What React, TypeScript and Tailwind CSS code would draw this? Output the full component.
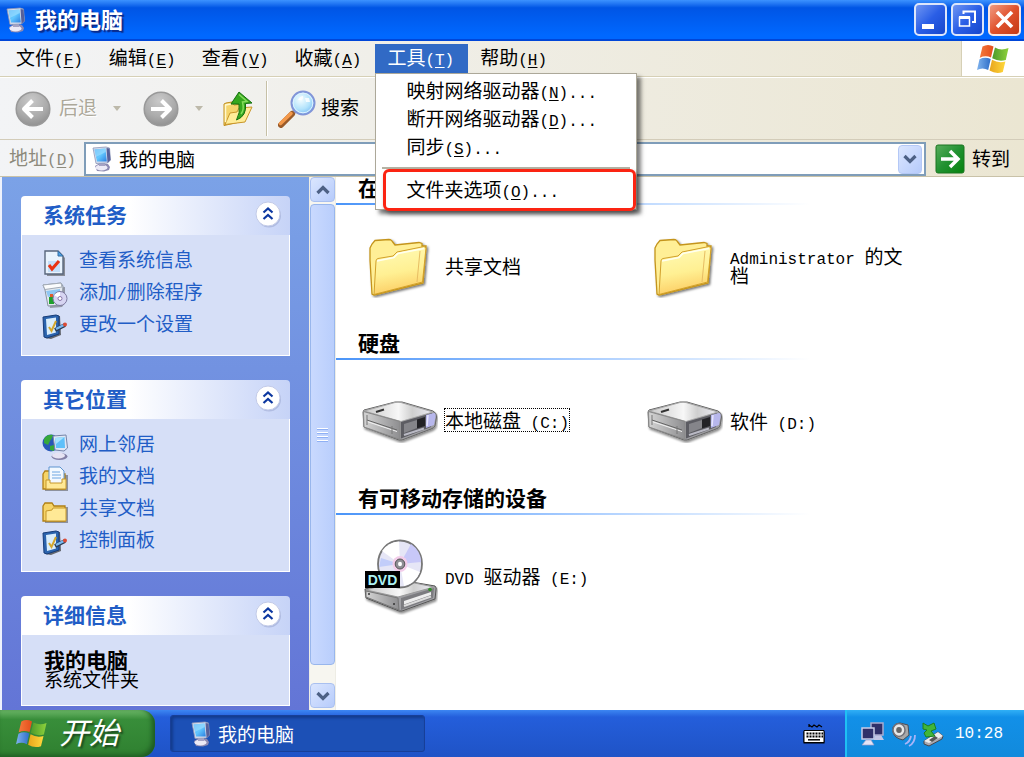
import React from 'react';

type IconProps = { className?: string };

/* Latin runs are set smaller so that two of them fill one CJK cell */
const Latin: React.FC<{ children: React.ReactNode }> = ({ children }) => (
  <span className="font-['Liberation_Mono',monospace] text-[16px] leading-0 whitespace-pre-wrap">{children}</span>
);

const Mixed: React.FC<{ text: string }> = ({ text }) => (
  <>
    {text.split(/([\x20-\x7e]+)/).filter(Boolean).map((part, i) =>
      /^[\x20-\x7e]+$/.test(part) ? <Latin key={i}>{part}</Latin> : <span key={i}>{part}</span>
    )}
  </>
);

const Mnemonic: React.FC<{ text: string; letter: string; tail?: string }> = ({ text, letter, tail }) => (
  <>
    {text}
    <Latin>(<span className="underline underline-offset-2">{letter}</span>){tail}</Latin>
  </>
);

const ComputerIcon: React.FC<IconProps> = ({ className }) => (
  <svg viewBox="0 0 20 26" className={className} aria-hidden="true">
    <defs>
      <linearGradient id="screen" x1="0" y1="0" x2="1" y2="1">
        <stop offset="0" stopColor="#3fa2f2" />
        <stop offset=".5" stopColor="#63c8ff" />
        <stop offset="1" stopColor="#2c7fe0" />
      </linearGradient>
    </defs>
    <path d="M3 20 L8 17 L16 18 L18 21 L17 24 L12 25.500 L5 25 Z" fill="#8d8ab2" />
    <ellipse cx="9.500" cy="21.500" rx="6" ry="3" fill="#eceaf6" />
    <path d="M7 16 h6 v4 h-6 z" fill="#a5a3c4" />
    <path d="M1 2 L14 1 L17.500 2 L18.500 14 L15.500 17 L4 17.500 Z" fill="#d5dcec" stroke="#8d97b8" strokeWidth=".8" />
    <path d="M14.500 2 L17.500 2.500 L18.500 14 L15.500 17 Z" fill="#56609a" />
    <path d="M2.500 3.500 L13.500 2.500 L14.800 15.500 L5 15.500 Z" fill="url(#screen)" />
    <path d="M2.500 3.500 L13.500 2.500 L13.800 6 L4 11 Z" fill="#a4e0ff" opacity=".6" />
  </svg>
);

const FlagIcon: React.FC<IconProps> = ({ className }) => (
  <svg viewBox="0 0 32 30" className={className} aria-hidden="true">
    <defs>
      <linearGradient id="fr" x1="0" x2="1"><stop offset="0" stopColor="#f4793b" /><stop offset="1" stopColor="#e44d1c" /></linearGradient>
      <linearGradient id="fg" x1="0" x2="1"><stop offset="0" stopColor="#4c9a2b" /><stop offset="1" stopColor="#8ed13c" /></linearGradient>
      <linearGradient id="fb" x1="0" x2="1"><stop offset="0" stopColor="#7fb3ee" /><stop offset="1" stopColor="#2f6ec8" /></linearGradient>
      <linearGradient id="fy" x1="0" x2="1"><stop offset="0" stopColor="#e8a51c" /><stop offset="1" stopColor="#ffd83c" /></linearGradient>
    </defs>
    <path d="M5.500 2.500 Q11 -.5 16.500 2.500 L14 13.500 Q8.500 11 2.800 13.800 Z" fill="url(#fr)" />
    <path d="M18 3.500 Q24 7 31.500 4 L28.800 16 Q22 18 15.200 14.300 Z" fill="url(#fg)" />
    <path d="M2.500 15.200 Q8 12.500 13.700 15 L11.200 26 Q5.500 23 0 26 Z" fill="url(#fb)" />
    <path d="M15 15.800 Q21.500 19.500 28.400 17.500 L25.800 28 Q19 30.500 12.500 26.500 Z" fill="url(#fy)" />
  </svg>
);

const NavCircle: React.FC<{ flip?: boolean }> = ({ flip }) => (
  <svg viewBox="0 0 36 36" className="size-9 shrink-0" aria-hidden="true">
    <defs>
      <radialGradient id="gray" cx=".45" cy=".25" r=".8">
        <stop offset="0" stopColor="#c9c9c9" />
        <stop offset=".6" stopColor="#ababab" />
        <stop offset="1" stopColor="#8d8d8d" />
      </radialGradient>
    </defs>
    <circle cx="18" cy="18" r="16.800" fill="url(#gray)" stroke="#999" strokeWidth="1.500" />
    <path d={flip ? 'M8 18 H27 M18.500 9.500 L27 18 L18.500 26.500' : 'M28 18 H9 M17.500 9.500 L9 18 L17.500 26.500'} fill="none" stroke="#fff" strokeWidth="4" strokeLinejoin="round" />
  </svg>
);

const FolderUpIcon = () => (
  <svg viewBox="0 0 32 36" className="h-9 w-8" aria-hidden="true">
    <path d="M2 13 L4 12 L10 11 L12 14 L20 13 L22 16 L22 30 L2 34.500 Z" fill="#f5d56c" stroke="#c08c1a" />
    <path d="M3 33.500 L8 22 L15 21 L17 17 L30 16 L23 31 Z" fill="#ffec98" stroke="#c9962a" />
    <path d="M3.500 31 L3.500 14 L9 13" fill="none" stroke="#fff8cc" strokeWidth="1.500" />
    <path d="M17 1 L30 12 L23.500 12.500 Q25 25 14.500 29 Q18.500 22 17 13 L9 13 Z" fill="#35a71e" stroke="#157010" />
    <path d="M17 3.500 L25 10.500 L20.500 11 Q22.500 19 19 23" fill="none" stroke="#85dc5c" strokeWidth="1.500" />
  </svg>
);

const SearchIcon = () => (
  <svg viewBox="0 0 38 38" className="size-[38px]" aria-hidden="true">
    <defs>
      <radialGradient id="lens" cx=".4" cy=".35" r=".7">
        <stop offset="0" stopColor="#f4fdff" />
        <stop offset=".6" stopColor="#b2e3fc" />
        <stop offset="1" stopColor="#77b9f2" />
      </radialGradient>
    </defs>
    <path d="M17 21 L13 25" stroke="#8d93b5" strokeWidth="4" />
    <path d="M14 24 L3 35" stroke="#9a5b2a" strokeWidth="6" strokeLinecap="round" />
    <path d="M13 23.500 L2.500 33.500" stroke="#f4994a" strokeWidth="3.500" strokeLinecap="round" />
    <circle cx="25" cy="13" r="11.500" fill="url(#lens)" stroke="#8295d8" strokeWidth="2" />
    <circle cx="25" cy="13" r="9.800" fill="none" stroke="#dff3ff" />
    <path d="M20 10 q2-4 5-4 q1 3-2 4 z M27 8 h4 l1 4 h-4z" fill="#fff" opacity=".8" />
  </svg>
);

const GoIcon = () => (
  <svg viewBox="0 0 30 30" className="size-[30px] shrink-0" aria-hidden="true">
    <defs>
      <linearGradient id="go" x1="0" y1="0" x2="1" y2="1">
        <stop offset="0" stopColor="#58ad5c" />
        <stop offset=".5" stopColor="#219131" />
        <stop offset="1" stopColor="#05830d" />
      </linearGradient>
    </defs>
    <rect x="1" y="1" width="28" height="28" rx="2" fill="url(#go)" stroke="#1a7420" />
    <path d="M6 15 H22 M15 7 L23 15 L15 23" fill="none" stroke="#fff" strokeWidth="3.500" />
  </svg>
);

const BigFolder = () => (
  <svg viewBox="0 0 76 62" className="w-[76px]" aria-hidden="true">
    <defs>
      <linearGradient id="fold" x1="0" y1="0" x2=".2" y2="1">
        <stop offset="0" stopColor="#fffbb8" />
        <stop offset=".6" stopColor="#fff093" />
        <stop offset="1" stopColor="#fccf66" />
      </linearGradient>
      <filter id="fs" x="-20%" y="-20%" width="150%" height="150%">
        <feDropShadow dx="1.500" dy="1.500" stdDeviation="1" floodOpacity=".55" />
      </filter>
    </defs>
    <g filter="url(#fs)">
      <path d="M8 12 L10 8 L13 4.500 L27 3.500 Q29 3.500 30 5 L33 9 L57 6.500 L60 7.500 L60 10 L64 10 L61 47 L12 59 L10 58 L8 24 Z" fill="#ffef96" stroke="#c4941a" strokeWidth="1.300" />
      <path d="M14 25 Q14 23 16 22.500 L31 20 L35 16 L62 10.500 L64 12 L60.500 46 L12 58.500 Z" fill="url(#fold)" stroke="#d2a02a" />
      <path d="M15 25 L32 21.500 L36 17.500 L62 12.500" fill="none" stroke="#fffff0" strokeWidth="1.500" />
      <path d="M58 15 L55 46" stroke="#e7bd63" fill="none" />
    </g>
  </svg>
);

const DriveDefs = () => (
  <defs>
    <linearGradient id="dtop" x1="0" y1="0" x2="1" y2="0">
      <stop offset="0" stopColor="#c9c9c9" />
      <stop offset=".5" stopColor="#f7f7f7" />
      <stop offset=".7" stopColor="#cfcfcf" />
      <stop offset="1" stopColor="#ececf4" />
    </linearGradient>
    <linearGradient id="dside" x1="0" y1="0" x2="1" y2="0">
      <stop offset="0" stopColor="#d4d4d4" />
      <stop offset="1" stopColor="#8e8e90" />
    </linearGradient>
    <filter id="ds" x="-20%" y="-20%" width="150%" height="150%">
      <feDropShadow dx="1" dy="2" stdDeviation="1" floodOpacity=".45" />
    </filter>
  </defs>
);

const HardDrive = () => (
  <svg viewBox="0 0 76 42" className="w-[76px]" aria-hidden="true">
    <DriveDefs />
    <g filter="url(#ds)">
      <path d="M1 11 L2 9 L33 1 L40 1 L71 10 Q75 12 74.500 16 L73 25 Q72 27 69 28 L40 39 L37 39 L2 26 Z" fill="#9c9ca0" stroke="#666" />
      <path d="M2 10 L33 1.500 Q36 1 39 1.500 L71 11 L39 20.500 Z" fill="url(#dtop)" stroke="#a6a6a6" />
      <path d="M1.500 10.500 L38 20.500 L38 38.500 L2 26 Z" fill="url(#dside)" stroke="#888" />
      <path d="M39 21 L70 12 L69 26 L39 37.500 Z" fill="#5c5c62" />
      <path d="M42 23 L55 19 L55 27 L42 32 Z" fill="#85858a" />
      <path d="M55 18.500 L63 16 L63 25 L55 27.500 Z" fill="#242428" />
      <path d="M64 14 L72 12 Q74 12 73.500 16 L72 24 L64 27 Z" fill="#b7b7ec" />
      <path d="M66 14 L65 25" stroke="#e6e6ff" strokeWidth="1.500" />
      <path d="M42 34 L62 27.500" stroke="#b9b9c4" strokeWidth="2" />
      <path d="M14 11 L22 8.500" stroke="#333" strokeWidth="2" />
      <path d="M5 19 L35 29" stroke="#666" />
      <path d="M5 20.500 L35 30.500" stroke="#f4f4f4" />
      <path d="M5 14 V24 M30 25 V33" stroke="#777" />
    </g>
  </svg>
);

const DvdDrive = () => (
  <svg viewBox="0 0 76 76" className="w-[76px]" aria-hidden="true">
    <DriveDefs />
    <g filter="url(#ds)">
      <path d="M3 50 L38 41 L73 47 Q75 49 74 51 L73 60 L40 72 L37 72 L4 59 Z" fill="#a0a0a4" stroke="#555" />
      <path d="M4 51 L38 41 L72 48 L36 58 Z" fill="url(#dtop)" stroke="#999" />
      <path d="M4 52 L36 59 L37 71 L4 58 Z" fill="url(#dside)" stroke="#777" />
      <path d="M39 59 L72 49 L71 59 L39 71 Z" fill="#7c7c80" />
      <path d="M42 62 L69 53 V56 L42 65.500 Z" fill="#eee" />
      <path d="M42 67 L69 57.500" stroke="#dcdcdc" strokeWidth="2" />
      <circle cx="68" cy="50.500" r="1.800" fill="#2f8f25" />
      <circle cx="32" cy="65" r="1" fill="#333" />
      <circle cx="7" cy="55" r="1" fill="#333" />
    </g>
    <ellipse cx="38" cy="25" rx="22" ry="23.500" fill="#e6e6f6" stroke="#777" strokeWidth="1.800" />
    <path d="M38 25 L20 12 Q26 3 37 2.500 Z" fill="#fff" />
    <path d="M38 25 L49 5 Q59 12 59 23 Z" fill="#c8c8f8" />
    <path d="M38 25 L58 33 Q53 45 42 47 Z" fill="#fff" />
    <path d="M38 25 L17 28 L19 19 Z" fill="#c2cdfa" />
    <ellipse cx="38" cy="25" rx="7.500" ry="8" fill="#f3cdea" />
    <ellipse cx="38" cy="25" rx="4.800" ry="5" fill="#8e8e94" stroke="#555" />
    <ellipse cx="38" cy="25" rx="2" ry="2.300" fill="#fff" />
    <rect x="3" y="32" width="35" height="17" fill="#000" />
    <text x="20.500" y="46" textAnchor="middle" fontSize="14" fontWeight="700" fontFamily="Liberation Sans, sans-serif" fill="#aef3f4">DVD</text>
  </svg>
);

const CheckDocIcon = () => (
  <svg viewBox="0 0 26 28" className="w-[26px]" aria-hidden="true">
    <path d="M5 3 H17 L23 9 V27 H5 Z" fill="#555" opacity=".6" />
    <path d="M3 2 H16 L21 7 V25 H3 Z" fill="#e9f3fd" stroke="#59677c" strokeWidth="1.400" />
    <path d="M16 2 V7 H21 Z" fill="#4ba3e8" stroke="#376ca0" />
    <path d="M6 12 h12 v11 h-12z" fill="#c4dffa" />
    <path d="M7 16 L10 20 L17 12" fill="none" stroke="#ea3312" strokeWidth="3" />
  </svg>
);

const ProgramsIcon = () => (
  <svg viewBox="0 0 26 28" className="w-[26px]" aria-hidden="true">
    <path d="M5 8 L23 6 L23 22 L20 26 L8 27 Z" fill="#444" opacity=".45" />
    <path d="M1 4 L19 2 L21 5 L20 24 L6 25 L3 9 Z" fill="#e4e9ef" stroke="#8993a1" />
    <path d="M1 4 L19 2 L20 6 L3 8.500 Z" fill="#fbfcfd" stroke="#a3abb6" />
    <path d="M4 10 L18 8 V14 L6 16 Z" fill="#8fc6f2" />
    <path d="M7 16 h5 v7 h-5z" fill="#1ea02c" />
    <path d="M8 13 h3 v3 h-3z" fill="#e05c2c" />
    <circle cx="18" cy="17.500" r="7" fill="#d7d5f2" stroke="#7d7aa0" />
    <path d="M18 17.500 L12 14 Q15 11 18 11 Z" fill="#fff" />
    <circle cx="18" cy="17.500" r="2" fill="#fff" stroke="#87a" />
  </svg>
);

const SettingsIcon = () => (
  <svg viewBox="0 0 26 28" className="w-[26px]" aria-hidden="true">
    <path d="M4 4 L18 3 L19 22 L9 26 L3 25 Z" fill="#333" opacity=".7" />
    <path d="M1 4 L14 2 L17 3 L17 21 L5 25 L2 24 Z" fill="#2b63ad" stroke="#173c78" />
    <path d="M4 6 L14 4.500 V19.500 L5 22 Z" fill="#d9edfc" />
    <path d="M7 14 L9.500 18 L14 8" fill="none" stroke="#d4a72c" strokeWidth="2" />
    <path d="M13 17 L23 12" stroke="#2c3c52" strokeWidth="4" />
    <path d="M14 16 L22 12" stroke="#78b8f0" strokeWidth="2.400" />
    <circle cx="23" cy="11.500" r="2" fill="#dc4a34" />
  </svg>
);

const NetworkIcon = () => (
  <svg viewBox="0 0 26 28" className="w-[26px]" aria-hidden="true">
    <circle cx="9" cy="10" r="8.500" fill="#2857b8" />
    <path d="M2 6 Q5 1 11 2 Q10 6 8 8 L6 12 L2 10 Z M8 13 L12 12 V18 L8 17Z" fill="#35a83a" />
    <ellipse cx="17.500" cy="23.500" rx="8" ry="3.500" fill="#8380a6" />
    <ellipse cx="16.500" cy="22.500" rx="6.500" ry="3" fill="#e6e3f3" />
    <path d="M11 3 L24 2 L25.500 15 L22 18 L13 17 Z" fill="#dfe6f5" stroke="#7684a8" />
    <path d="M13 5 L22.500 4 L23 15 L14 15 Z" fill="#5fc0fa" />
    <path d="M13 5 L22.500 4 L14 11 Z" fill="#a7e2ff" />
  </svg>
);

const SmallFolder: React.FC<{ paper?: boolean }> = ({ paper }) => (
  <svg viewBox="0 0 26 28" className="w-[26px]" aria-hidden="true">
    <path d="M3 10 H26 V26 H3 Z" fill="#444" opacity=".5" />
    <path d="M1 9 L3 6 H10 L12 9 H23 V24 H1 Z" fill="#f6d467" stroke="#b07f14" strokeWidth="1.300" />
    {paper && <path d="M7 2 H18 L22 6 V20 H7 Z" fill="#f3f9ff" stroke="#5c93cf" />}
    {paper && <path d="M10 7 H18 M10 10 H19 M10 13 H19" stroke="#6ca6e2" />}
    <path d={paper ? 'M4 24 V15 H8 V18 H20 V14 H24 V24 Z' : 'M4 24 V14 L10 13 L11 11 H24 V24 Z'} fill="#ffe996" stroke="#c6972a" />
  </svg>
);

const Chevrons = () => (
  <svg viewBox="0 0 28 28" className="size-7" aria-hidden="true">
    <circle cx="15" cy="15.500" r="12" fill="#8f9cc8" opacity=".45" />
    <circle cx="14" cy="14" r="12" fill="#fff" stroke="#c3cbe8" />
    <path d="M9.500 12.500 L14 8.500 L18.500 12.500 M9.500 19 L14 15 L18.500 19" fill="none" stroke="#0c37a0" strokeWidth="2.200" />
  </svg>
);

const Arrow: React.FC<{ up?: boolean }> = ({ up }) => (
  <svg viewBox="0 0 14 10" className="w-3.5" aria-hidden="true">
    <path d={up ? 'M1.500 8 L7 2.500 L12.500 8' : 'M1.500 2 L7 7.500 L12.500 2'} fill="none" stroke="#4d6185" strokeWidth="3.200" />
  </svg>
);

const Triangle = () => (
  <svg viewBox="0 0 8 5" className="w-2" aria-hidden="true"><path d="M0 0 H8 L4 5 Z" fill="#bdb9aa" /></svg>
);

const menus = [
  { text: '文件', letter: 'F' },
  { text: '编辑', letter: 'E' },
  { text: '查看', letter: 'V' },
  { text: '收藏', letter: 'A' },
  { text: '工具', letter: 'T' },
  { text: '帮助', letter: 'H' },
];

const toolItems = [
  { text: '映射网络驱动器', letter: 'N' },
  { text: '断开网络驱动器', letter: 'D' },
  { text: '同步', letter: 'S' },
];

const panels = [
  {
    title: '系统任务',
    links: [
      { label: '查看系统信息', icon: <CheckDocIcon /> },
      { label: '添加/删除程序', icon: <ProgramsIcon /> },
      { label: '更改一个设置', icon: <SettingsIcon /> },
    ],
  },
  {
    title: '其它位置',
    links: [
      { label: '网上邻居', icon: <NetworkIcon /> },
      { label: '我的文档', icon: <SmallFolder paper /> },
      { label: '共享文档', icon: <SmallFolder /> },
      { label: '控制面板', icon: <SettingsIcon /> },
    ],
  },
];

const sections = [
  {
    title: '在',
    items: [
      { label: '共享文档', icon: <BigFolder /> },
      { label: 'Administrator 的文档', icon: <BigFolder /> },
    ],
  },
  {
    title: '硬盘',
    items: [
      { label: '本地磁盘 (C:)', icon: <HardDrive />, focused: true },
      { label: '软件 (D:)', icon: <HardDrive /> },
    ],
  },
  {
    title: '有可移动存储的设备',
    items: [{ label: 'DVD 驱动器 (E:)', icon: <DvdDrive /> }],
  },
];

const TitleBar = () => (
  <header className="flex h-[41px] items-center bg-linear-to-b from-[#3c92ff] via-[#0055e5] via-20% to-[#0068ff] to-90% border-b-2 border-[#0046d8] pl-1.5 pr-[3px] text-white">
    <ComputerIcon className="h-[26px] w-5" />
    <h1 className="ml-[9px] flex-1 pb-1 text-[22px] leading-6 font-bold [text-shadow:2px_2px_1px_#0a2a8a]">我的电脑</h1>
    <div className="flex gap-1">
      <button aria-label="最小化" className="size-[33px] rounded-[5px] border-2 border-[#dce6fb] bg-linear-to-br from-[#6f94f2] via-[#2a5ee6] to-[#1647cc]">
        <svg viewBox="0 0 29 29" aria-hidden="true"><rect x="6" y="19" width="12" height="5" fill="#fff" /></svg>
      </button>
      <button aria-label="还原" className="size-[33px] rounded-[5px] border-2 border-[#dce6fb] bg-linear-to-br from-[#6f94f2] via-[#2a5ee6] to-[#1647cc]">
        <svg viewBox="0 0 29 29" aria-hidden="true">
          <path d="M10.500 9 V6.500 H22 V17 H19" fill="none" stroke="#fff" strokeWidth="2" />
          <path d="M6.500 12.500 H16.500 V21 H6.500 Z" fill="none" stroke="#fff" strokeWidth="1.500" />
          <path d="M6 12.500 H17" stroke="#fff" strokeWidth="3" />
        </svg>
      </button>
      <button aria-label="关闭" className="size-[33px] rounded-[5px] border-2 border-[#fbe6e0] bg-linear-to-br from-[#ef9a80] via-[#e0512c] to-[#c43a14]">
        <svg viewBox="0 0 29 29" aria-hidden="true"><path d="M7 7 L22 22 M22 7 L7 22" stroke="#fff" strokeWidth="3.600" /></svg>
      </button>
    </div>
  </header>
);

const ToolsMenu = () => (
  <div role="menu" className="absolute top-full left-0 z-10 w-[262px] border border-[#aca899] bg-white pt-[3px] text-black shadow-[4px_4px_4px_rgba(0,0,0,0.5)]">
    {toolItems.map((item) => (
      <button key={item.letter} role="menuitem" className="block h-7 w-full pb-0.5 pl-[30px] text-left">
        <Mnemonic text={item.text} letter={item.letter} tail="..." />
      </button>
    ))}
    <hr className="mx-1.5 mt-1.5 border-t-2 border-[#b5b2a3]" />
    <button role="menuitem" className="-mb-0.5 ml-[7px] block h-[42px] w-[253px] rounded-md border-3 border-[#fb2412] pb-0.5 pl-5 text-left shadow-[2px_3px_4px_rgba(0,0,0,0.4)]">
      <Mnemonic text="文件夹选项" letter="O" tail="..." />
    </button>
  </div>
);

const MenuBar = () => (
  <div className="flex h-[37px] border-b border-white">
    <nav className="flex flex-1 items-start border-r border-b border-[#d6d0b6] pt-[3px] pl-1">
      {menus.map((menu) => (
        <div key={menu.letter} className="relative">
          <button className={menu.letter === 'T' ? 'h-[29px] bg-[#316ac5] pr-3.5 pb-1 pl-3 text-white' : 'h-[29px] pr-3.5 pb-1 pl-3'}>
            <Mnemonic text={menu.text} letter={menu.letter} />
          </button>
          {menu.letter === 'T' && <ToolsMenu />}
        </div>
      ))}
    </nav>
    <div className="flex w-[62px] items-center justify-center border-b border-[#d6d0b6] bg-white">
      <FlagIcon className="w-8" />
    </div>
  </div>
);

const Toolbar = () => (
  <div className="flex h-[62px] items-center border-b border-[#d3ccb9] pl-[15px]">
    <button className="flex items-center text-[#aca899] [text-shadow:1px_1px_0_#fff]" disabled>
      <NavCircle />
      <span className="ml-2 pb-1">后退</span>
    </button>
    <button aria-label="后退历史" className="ml-4" disabled><Triangle /></button>
    <button aria-label="前进" className="ml-[22px]" disabled><NavCircle flip /></button>
    <button aria-label="前进历史" className="ml-4" disabled><Triangle /></button>
    <button aria-label="向上" className="ml-[19px]"><FolderUpIcon /></button>
    <div className="ml-3 h-[55px] w-0.5 border-l border-[#c6c0a6] bg-white" />
    <button className="ml-2.5 flex items-center">
      <SearchIcon />
      <span className="ml-[5px] pb-1">搜索</span>
    </button>
  </div>
);

const AddressBar = () => (
  <div className="flex h-[37px] items-center border-b border-[#c9c2a8] pt-0.5 pl-[9px]">
    <label htmlFor="address" className="w-[75px] pb-1 text-[#8d8a7c]">
      <Mnemonic text="地址" letter="D" />
    </label>
    <div className="flex h-[34px] flex-1 items-center border-2 border-[#7f9db9] bg-white pr-0.5 pl-1.5">
      <ComputerIcon className="h-[26px] w-5" />
      <input id="address" defaultValue="我的电脑" className="ml-[7px] min-w-0 flex-1 outline-none" />
      <button aria-label="展开地址列表" className="flex h-[29px] w-6 items-center justify-center rounded-sm border border-[#b4c8f6] bg-linear-to-br from-[#dbe6fe] to-[#b6cbfb]">
        <Arrow />
      </button>
    </div>
    <button className="ml-[9px] flex items-center pr-3.5">
      <GoIcon />
      <span className="ml-[7px] pb-0.5">转到</span>
    </button>
  </div>
);

const PanelHeader: React.FC<{ title: string }> = ({ title }) => (
  <div className="flex h-[39px] items-center justify-between rounded-t-[4px] bg-linear-to-r from-white from-40% to-[#c6d3f7] pr-2 pl-[22px]">
    <h2 className="pb-[3px] text-[21px] leading-6 font-bold text-[#215dc6]">{title}</h2>
    <button aria-label={`收起${title}`} className="-mt-1"><Chevrons /></button>
  </div>
);

const Sidebar = () => (
  <aside className="flex w-[309px] shrink-0 flex-col gap-6 border-l-2 border-[#eef2fc] bg-linear-to-b from-[#7ba2e7] to-[#6375d6] pt-[19px] pr-[19px] pb-1 pl-[19px]">
    {panels.map((panel) => (
      <section key={panel.title}>
        <PanelHeader title={panel.title} />
        <ul className="border border-t-0 border-white bg-[#d6dff7] pt-2 pb-4 pl-5">
          {panel.links.map((link) => (
            <li key={link.label}>
              <a href="#" className="flex h-8 items-center text-[#215dc6]">
                <span className="mt-2">{link.icon}</span>
                <span className="ml-[11px]"><Mixed text={link.label} /></span>
              </a>
            </li>
          ))}
        </ul>
      </section>
    ))}
    <section>
      <PanelHeader title="详细信息" />
      <div className="border border-t-0 border-white bg-[#d6dff7] pt-[15px] pb-[17px] pl-[22px] leading-[19px]">
        <p className="text-[21px] font-bold">我的电脑</p>
        <p>系统文件夹</p>
      </div>
    </section>
  </aside>
);

const ScrollBar = () => (
  <div className="flex w-[27px] shrink-0 flex-col border-x border-[#eeede5] bg-[#f7f6f0] pb-0.5">
    <button aria-label="向上滚动" className="flex h-[25px] items-center justify-center rounded-sm border border-[#a9c0f0] bg-linear-to-br from-[#dbe6fe] to-[#b6cbfb]">
      <Arrow up />
    </button>
    <div className="mt-0.5 flex flex-1 flex-col items-center justify-center gap-0.5 rounded-sm border border-[#98b6ec] bg-linear-to-r from-[#c9d9fe] to-[#b9cefc]">
      <span className="h-0.5 w-[11px] border-t border-white bg-[#8fb0f4]" />
      <span className="h-0.5 w-[11px] border-t border-white bg-[#8fb0f4]" />
      <span className="h-0.5 w-[11px] border-t border-white bg-[#8fb0f4]" />
      <span className="h-0.5 w-[11px] border-t border-white bg-[#8fb0f4]" />
    </div>
    <button aria-label="向下滚动" className="mt-[18px] flex h-[25px] items-center justify-center rounded-sm border border-[#a9c0f0] bg-linear-to-br from-[#dbe6fe] to-[#b6cbfb]">
      <Arrow />
    </button>
  </div>
);

const Content = () => (
  <main className="min-w-0 flex-1 bg-white">
    {sections.map((section) => (
      <section key={section.title}>
        <h2 className="h-[26px] pl-[22px] text-[21px] leading-[21px] font-bold whitespace-nowrap">{section.title}</h2>
        <div className="h-0.5 w-[474px] bg-linear-to-r from-[#4a94f8] to-white" />
        <div className="flex h-[127px] items-center pb-[3px] pl-[26px]">
          {section.items.map((item) => (
            <button key={item.label} className="flex w-[285px] items-center text-left leading-[19px]">
              <span className="shrink-0">{item.icon}</span>
              <span className={item.focused ? 'mb-1 ml-1.5 border border-dotted border-black pt-px pb-0.5' : 'mb-1 ml-[7px] max-w-[180px]'}>
                <Mixed text={item.label} />
              </span>
            </button>
          ))}
        </div>
      </section>
    ))}
  </main>
);

const Taskbar = () => (
  <footer className="flex h-[47px] items-stretch bg-linear-to-b from-[#3d86f2] via-[#245edb] via-15% to-[#1f53c6] text-white">
    <button className="flex w-[155px] items-center rounded-r-[14px] bg-linear-to-b from-[#6cb868] via-[#388e3a] via-20% to-[#2f8030] pl-4 shadow-[inset_-3px_-2px_5px_#1d5a22]">
      <FlagIcon className="w-[31px]" />
      <span className="ml-3 pb-1.5 text-[30px] leading-9 italic [text-shadow:2px_2px_2px_#1c4a1e]">开始</span>
    </button>
    <button className="my-[5px] ml-[15px] flex w-[255px] items-center rounded-[3px] border border-[#173f98] bg-[#1c50b6] pl-5 shadow-[inset_2px_2px_3px_#133a8c]">
      <ComputerIcon className="h-[26px] w-5" />
      <span className="ml-[7px]">我的电脑</span>
    </button>
    <button aria-label="输入法" className="mr-5 ml-auto">
      <svg viewBox="0 0 22 22" className="w-[22px]" aria-hidden="true">
        <path d="M6 1 V4 M6 2 L9 4 L11 2 L14 4 L16 2 L19 4" fill="none" stroke="#000" strokeWidth="1.200" />
        <rect x=".5" y="8.500" width="21" height="12" fill="#000" />
        <path d="M1 7.500 H21 V19.500 H1 Z" fill="#fff" stroke="#000" />
        <path d="M3.500 10.500 H20 M3.500 13.500 H20" stroke="#000" strokeWidth="1.800" strokeDasharray="2 1" />
        <path d="M5 16.800 H17" stroke="#000" strokeWidth="1.500" />
      </svg>
    </button>
    <div className="flex w-[179px] items-center border-l-2 border-[#1fc0f4] bg-linear-to-b from-[#30b0f6] via-[#1290e8] via-15% to-[#118adc] pl-3.5">
      <svg viewBox="0 0 24 26" className="w-6" aria-hidden="true">
        <path d="M14 14 h6 l3 5 h-10z" fill="#c4c6e6" />
        <path d="M10 2 H22 V14 H10 Z" fill="#30306a" stroke="#a9abd0" strokeWidth="1.500" />
        <path d="M1 7 H13 V18 H1 Z" fill="#30306a" stroke="#c9cbe8" strokeWidth="1.500" />
        <path d="M5 19 h5 l3 5 h-12 z" fill="#e4e4f6" stroke="#9d9fc8" strokeWidth=".7" />
      </svg>
      <svg viewBox="0 0 26 26" className="ml-1.5 w-[26px]" aria-hidden="true">
        <path d="M2 6 Q4 2 9 2 L17 4 L18 14 L12 19 Q3 17 2 11 Z" fill="#a8a8a8" stroke="#4c4c54" />
        <ellipse cx="8" cy="9" rx="6" ry="6.500" fill="#e8e8e8" stroke="#707078" strokeWidth="1.500" />
        <ellipse cx="8" cy="9" rx="2.800" ry="3" fill="#666" />
        <path d="M14 23 Q19 21 20 15 M18 25 Q24 22 24 14" fill="none" stroke="#a8b4f8" strokeWidth="1.800" />
      </svg>
      <svg viewBox="0 0 24 26" className="ml-1 w-6" aria-hidden="true">
        <path d="M3 20 L17 11 L22 15 L21 18 L8 25 L3 23 Z" fill="#a8a8b0" stroke="#46464c" />
        <path d="M3 20 L17 11 L22 15 L8 22 Z" fill="#ececec" />
        <path d="M8 19 L14 15 L17 17 L11 21Z" fill="#555" />
        <path d="M2 2 L7 5 L13 2 L15 8 L10 10 L14 15 L5 16 L3 12 L6 9 L2 8 Z" fill="#41b53a" stroke="#1c7f1e" />
      </svg>
      <time className="ml-2.5 font-['Liberation_Mono',monospace] text-[16px]">10:28</time>
    </div>
  </footer>
);

export default function App() {
  return (
    <div className="flex min-h-screen flex-col bg-white font-['Noto_Sans_CJK_SC',sans-serif] text-[19px] leading-6 text-black">
      <TitleBar />
      <div className="bg-linear-to-r from-[#f3f4f6] to-[#ebe6d2]">
        <MenuBar />
        <Toolbar />
        <AddressBar />
      </div>
      <div className="flex flex-1">
        <Sidebar />
        <ScrollBar />
        <Content />
      </div>
      <Taskbar />
    </div>
  );
}
